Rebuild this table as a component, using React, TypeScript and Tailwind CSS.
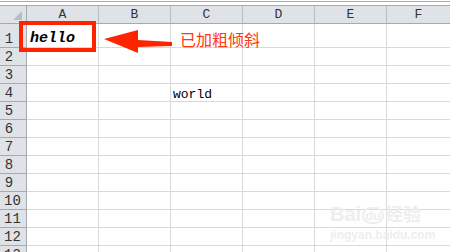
import React from "react";

const cols = ["A", "B", "C", "D", "E", "F"];
const rows = Array.from({ length: 13 }, (_, i) => i + 1);

function Cell({ r, c }: { r: number; c: number }) {
  const last = c === 5;
  let content: React.ReactNode = null;
  if (r === 1 && c === 0) {
    content = (
      <span className="pl-[3px] pb-[1px] font-bold italic text-[15px] leading-none text-black" style={{ fontFamily: '"Liberation Mono", monospace' }}>
        hello
      </span>
    );
  }
  if (r === 4 && c === 2) {
    content = (
      <span className="pl-[2px] text-[13px] leading-none text-black" style={{ fontFamily: '"Liberation Mono", monospace' }}>
        world
      </span>
    );
  }
  return (
    <div
      className={`flex items-end shrink-0 border-b border-[#d9d9d9] ${last ? "flex-1" : "w-[72px] border-r"}`}
    >
      {content}
    </div>
  );
}

export default function App() {
  return (
    <div className="relative w-[450px] h-[252px] overflow-hidden bg-white" style={{ fontFamily: '"Liberation Mono", monospace' }}>
      {/* top strip */}
      <div className="h-[5px] flex flex-col">
        <div className="h-[1px] bg-white" />
        <div className="h-[1px] bg-[#a7abb0]" />
        <div className="flex-1 bg-white" />
      </div>
      {/* header row */}
      <div className="flex h-[19px] bg-[#dfe3e8] border-t border-b border-[#a5aab1]">
        <div className="relative w-[27px] shrink-0 border-r border-[#a5aab1]">
          <div
            className="absolute right-[4px] bottom-[3px] w-[9px] h-[9px] bg-[#b9bec4]"
            style={{ clipPath: "polygon(100% 0, 100% 100%, 0 100%)" }}
          />
        </div>
        {cols.map((c, i) => (
          <div
            key={c}
            className={`flex items-center justify-center text-[13px] text-[#333] leading-none ${i === 5 ? "flex-1" : "w-[72px] shrink-0 border-r border-[#b8bdc3]"}`}
          >
            {c}
          </div>
        ))}
      </div>
      {/* body rows */}
      {rows.map((r) => (
        <div key={r} className={`flex ${r === 1 ? "h-[24px]" : "h-[18px]"}`}>
          <div className="w-[27px] shrink-0 flex items-end justify-center pr-[8px] pb-[1px] bg-[#dfe3e8] border-r border-b border-[#a5aab1] text-[14px] leading-none text-[#333]">
            <span className={r >= 10 ? "pl-[7px]" : ""}>{r}</span>
          </div>
          {cols.map((_, c) => (
            <Cell key={c} r={r} c={c} />
          ))}
        </div>
      ))}

      {/* red highlight box */}
      <div className="absolute left-[19px] top-[21px] w-[77px] h-[31px] border-[4px] border-[#ff2400]" />

      {/* arrow */}
      <svg className="absolute left-0 top-0" width="450" height="252" viewBox="0 0 450 252">
        <polygon
          points="104,39 138,30 138,40 172,42 172,46 138,47 138,53"
          fill="#ff2400"
        />
      </svg>

      {/* annotation */}
      <div
        className="absolute left-[180px] top-[31px] text-[16px] leading-none text-[#ff3a10]"
        style={{ fontFamily: '"Noto Sans CJK SC", sans-serif' }}
      >
        已加粗倾斜
      </div>

      {/* watermark */}
      <div className="absolute left-[330px] top-[204px] flex flex-col items-start text-[#eeeeee] pointer-events-none" style={{ fontFamily: '"Liberation Sans", "Noto Sans CJK SC", sans-serif' }}>
        <div className="flex items-end gap-[1px] text-[20px] font-bold leading-none">
          <span>Bai</span>
          <span className="text-[13px] rounded-full border-2 border-[#eeeeee] px-[1px]">du</span>
          <span className="text-[18px]">经验</span>
        </div>
        <div className="text-[12px] leading-none mt-[5px] font-bold">jingyan.baidu.com</div>
      </div>
    </div>
  );
}
